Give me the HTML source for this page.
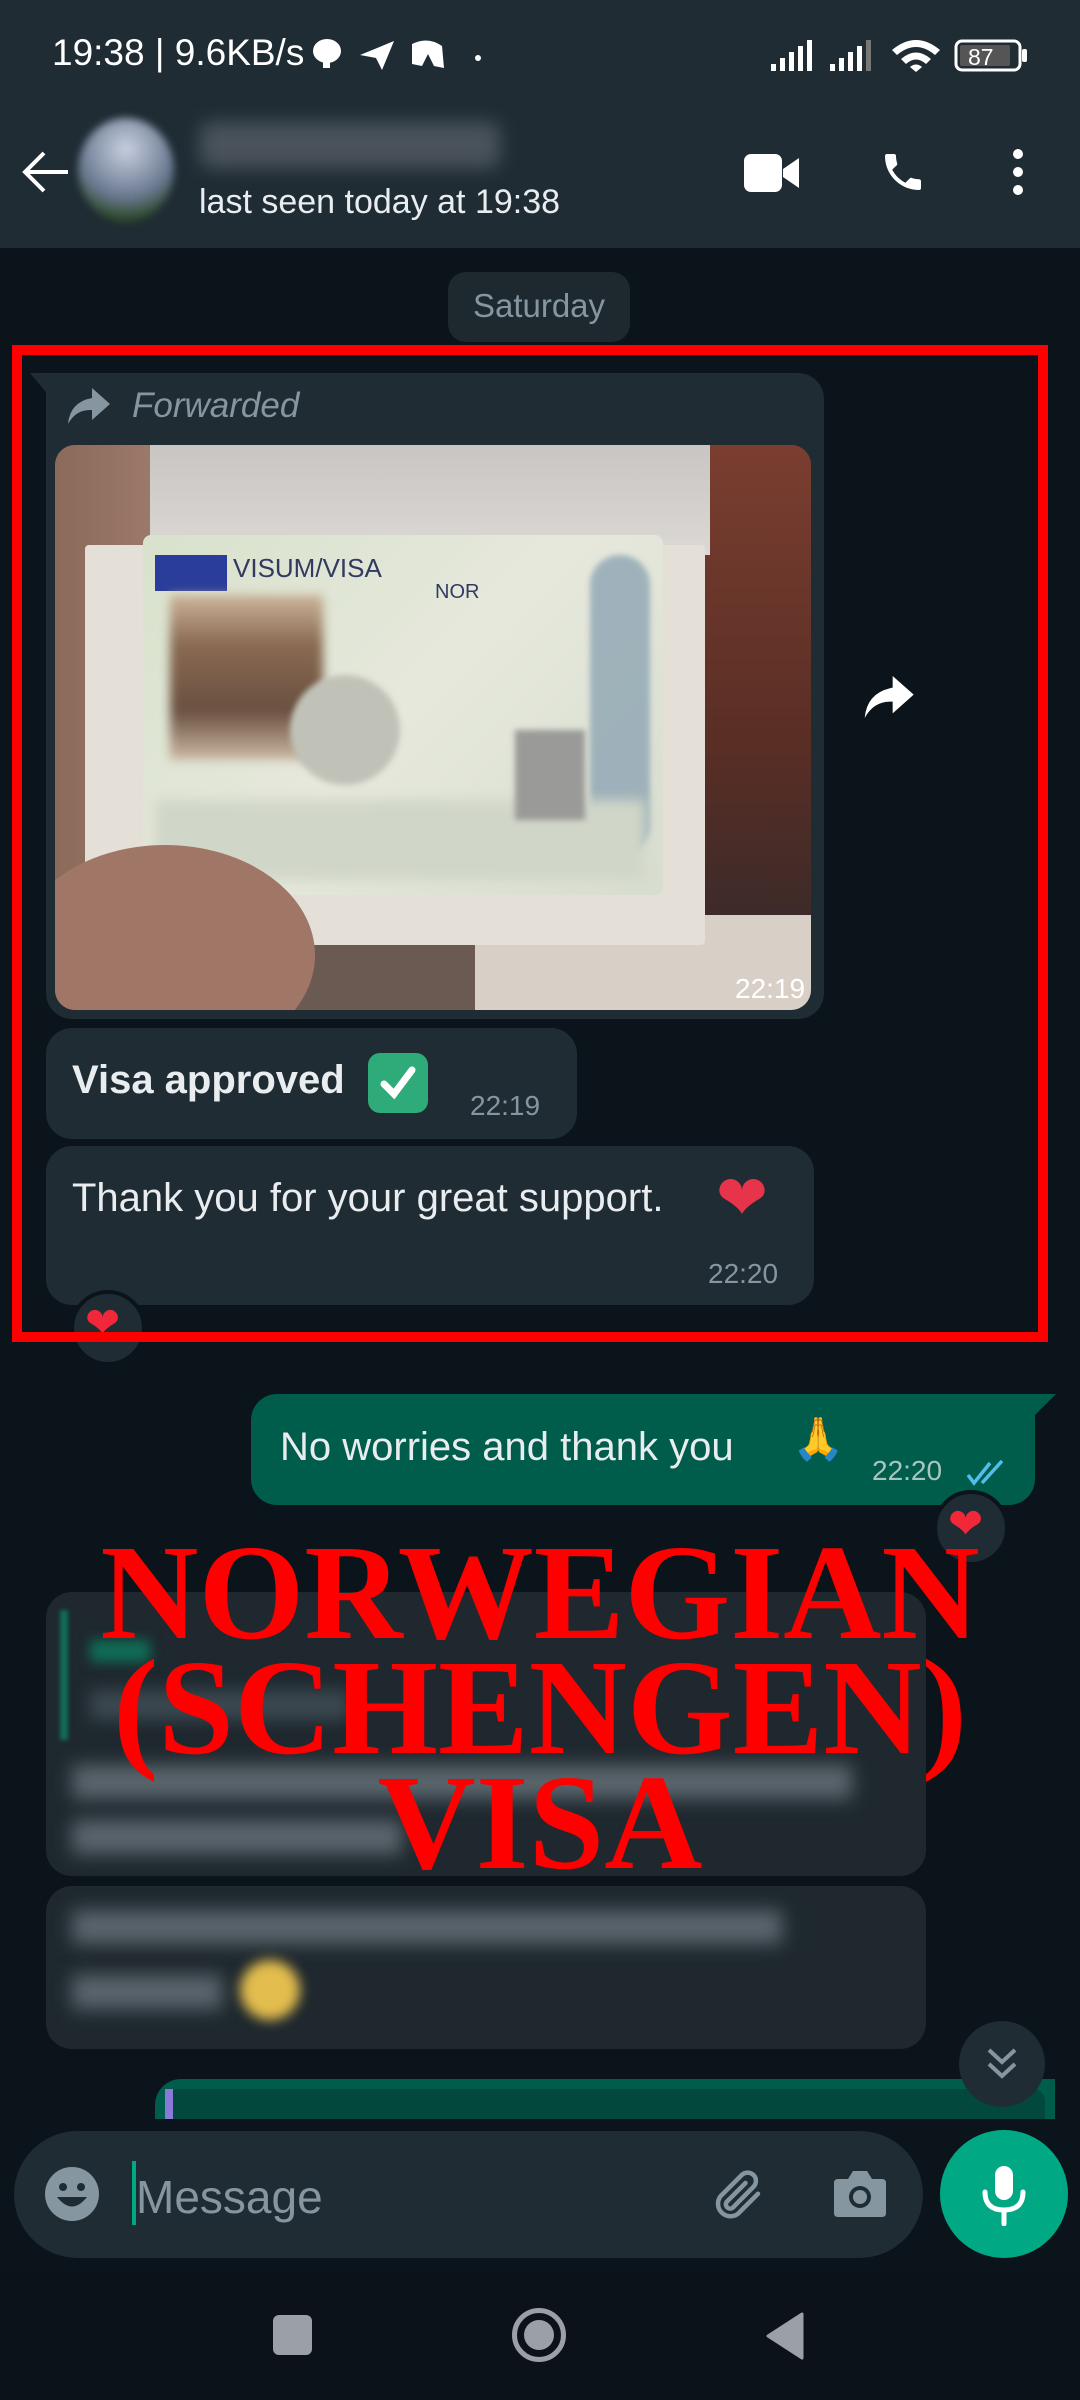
<!DOCTYPE html>
<html><head><meta charset="utf-8"><style>
*{margin:0;padding:0;box-sizing:border-box}
body{width:1080px;height:2400px;background:#0b141a;font-family:"Liberation Sans",sans-serif;position:relative;overflow:hidden;color:#e9edef}
.a{position:absolute}
.bub{position:absolute;background:#202c33;border-radius:26px}
.t{position:absolute;white-space:nowrap}
.time{color:#8696a0;font-size:28px}
</style></head><body>
<!-- header -->
<div class="a" style="left:0;top:0;width:1080px;height:248px;background:#1f2c34"></div>
<div class="t" style="left:52px;top:32px;font-size:37px;color:#fff">19:38 | 9.6KB/s</div>
<svg class="a" style="left:310px;top:38px" width="180" height="34" viewBox="0 0 180 34" fill="#fff"><ellipse cx="17" cy="13" rx="14" ry="12"/><rect x="13" y="20" width="7" height="10"/><path d="M50 17 L84 3 L72 32 L66 20 Z"/><path d="M102 6 Q118 -2 132 8 L134 30 L124 28 L118 16 L112 28 L102 26 Z"/><circle cx="168" cy="20" r="3"/></svg>
<svg class="a" style="left:771px;top:38px" width="260" height="34" viewBox="0 0 260 34" fill="#fff"><rect x="0" y="26" width="5" height="7"/><rect x="9" y="20" width="5" height="13"/><rect x="18" y="14" width="5" height="19"/><rect x="27" y="8" width="5" height="25"/><rect x="36" y="2" width="5" height="31"/><rect x="59" y="26" width="5" height="7"/><rect x="68" y="20" width="5" height="13"/><rect x="77" y="14" width="5" height="19"/><rect x="86" y="8" width="5" height="25"/><rect x="95" y="2" width="5" height="31" fill="#777"/><path d="M121 12 Q145 -8 169 12 L164 17 Q145 1 126 17Z M130 21 Q145 8 160 21 L155 26 Q145 17 135 26Z M139 29 Q145 24 151 29 L145 34Z"/><rect x="185" y="3" width="64" height="29" rx="6" fill="none" stroke="#fff" stroke-width="3"/><rect x="189" y="7" width="50" height="21" rx="2" fill="#555"/><rect x="251" y="11" width="5" height="13" rx="2"/><text x="197" y="27" font-size="23" font-family="Liberation Sans" fill="#fff">87</text></svg>
<svg class="a" style="left:22px;top:150px" width="48" height="44" viewBox="0 0 48 44" fill="none" stroke="#fff" stroke-width="4"><path d="M46 22H4M22 3L3 22L22 41"/></svg>
<div class="a" style="left:78px;top:118px;width:96px;height:104px;border-radius:50%;background:radial-gradient(circle at 50% 30%,#c8d0e0,#6a7890 55%,#2d4a2a 80%);filter:blur(4px)"></div>
<div class="a" style="left:200px;top:122px;width:300px;height:46px;background:#4a535a;filter:blur(9px);border-radius:10px"></div>
<div class="t" style="left:199px;top:183px;font-size:34px;color:#e9edef">last seen today at 19:38</div>
<svg class="a" style="left:744px;top:154px" width="56" height="38" viewBox="0 0 56 38" fill="#fff"><rect x="0" y="0" width="38" height="38" rx="7"/><path d="M39 15 L55 4 V34 L39 23Z"/></svg>
<svg class="a" style="left:878px;top:148px" width="50" height="48" viewBox="0 0 24 24" fill="#fff"><path d="M6.6 10.8c1.4 2.8 3.8 5.1 6.6 6.6l2.2-2.2c.3-.3.7-.4 1-.2 1.1.4 2.300.6 3.6.6.6 0 1 .4 1 1V20c0 .6-.4 1-1 1C10.6 21 3 13.4 3 4c0-.6.4-1 1-1h3.5c.6 0 1 .4 1 1 0 1.3.2 2.5.6 3.6.1.3 0 .7-.2 1z"/></svg>
<svg class="a" style="left:1010px;top:148px" width="16" height="48" viewBox="0 0 16 48" fill="#fff"><circle cx="8" cy="6" r="5"/><circle cx="8" cy="24" r="5"/><circle cx="8" cy="42" r="5"/></svg>

<!-- date pill -->
<div class="a" style="left:448px;top:272px;width:182px;height:70px;background:#1d282f;border-radius:18px"></div>
<div class="t" style="left:448px;top:287px;width:182px;text-align:center;font-size:33px;color:#8696a0">Saturday</div>

<!-- forwarded image bubble -->
<div class="bub" style="left:46px;top:373px;width:778px;height:646px;border-top-left-radius:0"></div>
<svg class="a" style="left:30px;top:373px" width="20" height="24"><path d="M0 0H20V24Z" fill="#202c33"/></svg>
<svg class="a" style="left:66px;top:388px" width="44" height="36" viewBox="0 0 44 36" fill="#8696a0"><path d="M26 0 L44 16 L26 32 V22 Q10 21 2 36 Q4 14 26 10Z"/></svg>
<div class="t" style="left:132px;top:386px;font-size:35px;font-style:italic;color:#8696a0">Forwarded</div>
<div class="a" style="left:55px;top:445px;width:756px;height:565px;border-radius:20px;overflow:hidden;background:#6b5a52">
  <div class="a" style="left:0;top:0;width:200px;height:565px;background:linear-gradient(90deg,#8a6a5a,#b08878)"></div>
  <div class="a" style="left:610px;top:0;width:146px;height:490px;background:linear-gradient(180deg,#7a3e30,#5a2e25 60%,#3a2a2a)"></div>
  <div class="a" style="left:420px;top:470px;width:336px;height:95px;background:#d8d0c6"></div>
  <div class="a" style="left:95px;top:0;width:560px;height:110px;background:linear-gradient(180deg,#c9c5c3,#dcd8d4)"></div>
  <div class="a" style="left:30px;top:100px;width:620px;height:400px;background:#e4e0d8;border-radius:4px"></div>
  <div class="a" style="left:88px;top:90px;width:520px;height:360px;background:linear-gradient(135deg,#d8e2cc,#e6e8dc 50%,#d7ddcf);border-radius:8px"></div>
  <div class="a" style="left:100px;top:110px;width:72px;height:36px;background:#2b3d9a"></div>
  <div class="t" style="left:178px;top:108px;font-size:26px;color:#333a60">VISUM/VISA</div>
  <div class="t" style="left:380px;top:136px;font-size:20px;color:#333a60">NOR</div>
  <div class="a" style="left:535px;top:110px;width:60px;height:300px;background:#8fa6b4;border-radius:30px;filter:blur(3px);opacity:.8"></div>
  <div class="a" style="left:115px;top:150px;width:153px;height:165px;background:linear-gradient(180deg,#cbb49a,#8a6a52 30%,#6a5040 70%,#cdb9a4);filter:blur(5px)"></div>
  <div class="a" style="left:235px;top:230px;width:110px;height:110px;border-radius:50%;background:#c0c2b8;filter:blur(3px)"></div>
  <div class="a" style="left:100px;top:355px;width:490px;height:80px;background:#d0d6c8;filter:blur(6px)"></div>
  <div class="a" style="left:460px;top:285px;width:70px;height:90px;background:#9a9a98;filter:blur(3px)"></div>
  <div class="a" style="left:-40px;top:400px;width:300px;height:220px;border-radius:50%;background:#a07666"></div>
  <div class="t" style="left:680px;top:528px;font-size:28px;color:#fff">22:19</div>
</div>
<svg class="a" style="left:862px;top:676px" width="52" height="42" viewBox="0 0 44 36" fill="#fff"><path d="M26 0 L44 16 L26 32 V22 Q10 21 2 36 Q4 14 26 10Z"/></svg>

<!-- Visa approved -->
<div class="bub" style="left:46px;top:1028px;width:531px;height:111px"></div>
<div class="t" style="left:72px;top:1058px;font-size:40px;font-weight:bold;color:#e9edef">Visa approved</div>
<div class="a" style="left:368px;top:1053px;width:60px;height:60px;border-radius:12px;background:#2eab78"></div>
<svg class="a" style="left:372px;top:1058px" width="52" height="50" viewBox="0 0 52 50"><path d="M12 26 L22 36 L40 12" fill="none" stroke="#fff" stroke-width="7" stroke-linecap="round"/></svg>
<div class="t time" style="left:470px;top:1090px">22:19</div>

<!-- Thank you -->
<div class="bub" style="left:46px;top:1146px;width:768px;height:159px"></div>
<div class="t" style="left:72px;top:1176px;font-size:40px;color:#e9edef">Thank you for your great support.</div>
<div class="a" style="left:716px;top:1168px;font-size:62px;color:#e8344a;line-height:1">❤</div>
<div class="t time" style="left:708px;top:1258px">22:20</div>
<div class="a" style="left:70px;top:1290px;width:76px;height:76px;border-radius:50%;background:#202c33;border:4px solid #0b141a"></div>
<div class="a" style="left:85px;top:1302px;font-size:42px;color:#f0283a;line-height:1">❤</div>

<!-- red box -->
<div class="a" style="left:12px;top:345px;width:1036px;height:997px;border:10px solid #ff0000"></div>

<!-- outgoing -->
<div class="a" style="left:251px;top:1394px;width:784px;height:111px;background:#005c4b;border-radius:26px;border-top-right-radius:0"></div>
<svg class="a" style="left:1030px;top:1394px" width="26" height="26"><path d="M0 0H26L0 26Z" fill="#005c4b"/></svg>
<div class="t" style="left:280px;top:1425px;font-size:40px;color:#e9edef">No worries and thank you</div>
<div class="a" style="left:792px;top:1418px;font-size:42px;color:#f5b82e;line-height:1">🙏</div>
<div class="t" style="left:872px;top:1455px;font-size:28px;color:#a8c6bf">22:20</div>
<svg class="a" style="left:966px;top:1459px" width="44" height="28" viewBox="0 0 44 28" fill="none" stroke="#53bdeb" stroke-width="3.5"><path d="M2 16 L8 24 L24 4 M16 24 L36 2"/></svg>
<div class="a" style="left:933px;top:1490px;width:76px;height:76px;border-radius:50%;background:#202c33;border:4px solid #0b141a"></div>
<div class="a" style="left:948px;top:1503px;font-size:42px;color:#f0283a;line-height:1">❤</div>

<!-- blurred incoming -->
<div class="bub" style="left:46px;top:1592px;width:880px;height:284px;background:#1e282e"></div>
<div class="a" style="left:60px;top:1610px;width:8px;height:130px;background:#0f6e56;filter:blur(2px)"></div>
<div class="a" style="left:90px;top:1640px;width:60px;height:22px;background:#0f6e56;filter:blur(6px)"></div>
<div class="a" style="left:90px;top:1690px;width:260px;height:30px;background:#3b4850;filter:blur(8px)"></div>
<div class="a" style="left:72px;top:1765px;width:780px;height:34px;background:#5a656c;filter:blur(9px)"></div>
<div class="a" style="left:72px;top:1820px;width:330px;height:34px;background:#5a656c;filter:blur(9px)"></div>
<div class="bub" style="left:46px;top:1886px;width:880px;height:163px;background:#1e282e"></div>
<div class="a" style="left:72px;top:1910px;width:710px;height:34px;background:#5a656c;filter:blur(9px)"></div>
<div class="a" style="left:72px;top:1975px;width:150px;height:34px;background:#5a656c;filter:blur(9px)"></div>
<div class="a" style="left:240px;top:1960px;width:60px;height:60px;border-radius:50%;background:#e3bd4e;filter:blur(6px)"></div>

<!-- overlay text -->
<div class="a" style="left:0;top:1536px;width:1080px;text-align:center;font-family:'Liberation Serif',serif;font-weight:bold;font-size:136px;line-height:115px;color:#ff0000">NORWEGIAN<br>(SCHENGEN)<br>VISA</div>

<!-- green partial + scroll btn -->
<div class="a" style="left:155px;top:2079px;width:900px;height:40px;background:#005c4b;border-radius:26px 0 0 0;overflow:hidden"><div class="a" style="left:10px;top:10px;width:880px;height:40px;background:#02483d;border-radius:12px"></div><div class="a" style="left:10px;top:10px;width:8px;height:40px;background:#8a7ad8"></div></div>
<div class="a" style="left:0;top:2119px;width:1080px;height:152px;background:#0b141a"></div>
<div class="a" style="left:959px;top:2021px;width:86px;height:86px;border-radius:50%;background:#202c33"></div>
<svg class="a" style="left:986px;top:2044px" width="32" height="40" viewBox="0 0 32 40" fill="none" stroke="#8696a0" stroke-width="4"><path d="M3 6 L16 18 L29 6 M3 20 L16 32 L29 20"/></svg>

<!-- input -->
<div class="a" style="left:14px;top:2131px;width:909px;height:127px;border-radius:64px;background:#1f2c34"></div>
<svg class="a" style="left:44px;top:2166px" width="56" height="56" viewBox="0 0 56 56"><circle cx="28" cy="28" r="27" fill="#8696a0"/><circle cx="19" cy="21" r="4" fill="#1f2c34"/><circle cx="37" cy="21" r="4" fill="#1f2c34"/><path d="M13 31 Q28 50 43 31Z" fill="#1f2c34"/></svg>
<div class="a" style="left:132px;top:2161px;width:4px;height:64px;background:#00a884"></div>
<div class="t" style="left:136px;top:2170px;font-size:46px;color:#8696a0">Message</div>
<svg class="a" style="left:708px;top:2165px" width="60" height="60" viewBox="0 0 24 24" fill="none" stroke="#8696a0" stroke-width="1.8" stroke-linecap="round"><path d="M20 11.5 L12 19.5 a5 5 0 0 1-7-7 L13.5 4 a3.3 3.3 0 0 1 4.7 4.7 L10 17 a1.7 1.7 0 0 1-2.4-2.4 L15 7.2"/></svg>
<svg class="a" style="left:832px;top:2165px" width="56" height="56" viewBox="0 0 56 56" fill="#8696a0"><path d="M6 14 H16 L21 6 H35 L40 14 H50 Q54 14 54 18 V48 Q54 52 50 52 H6 Q2 52 2 48 V18 Q2 14 6 14Z"/><circle cx="28" cy="32" r="11" fill="#1f2c34"/><circle cx="28" cy="32" r="7" fill="#8696a0"/></svg>
<div class="a" style="left:940px;top:2130px;width:128px;height:128px;border-radius:50%;background:#00a884"></div>
<svg class="a" style="left:980px;top:2164px" width="48" height="62" viewBox="0 0 48 62" fill="none" stroke="#fff" stroke-width="5"><rect x="15" y="2" width="18" height="34" rx="9" fill="#fff" stroke="none"/><path d="M5 28 Q5 46 24 46 Q43 46 43 28 M24 46 V60" stroke-linecap="round"/></svg>

<!-- nav bar -->
<div class="a" style="left:0;top:2271px;width:1080px;height:129px;background:#0b121a"></div>
<div class="a" style="left:273px;top:2315px;width:39px;height:40px;border-radius:6px;background:#9aa0a6"></div>
<div class="a" style="left:512px;top:2308px;width:54px;height:54px;border-radius:50%;border:5px solid #9aa0a6"></div>
<div class="a" style="left:524px;top:2320px;width:30px;height:30px;border-radius:50%;background:#9aa0a6"></div>
<svg class="a" style="left:766px;top:2312px" width="38" height="48"><path d="M36 2 L2 24 L36 46Z" fill="#9aa0a6" stroke="#9aa0a6" stroke-width="3" stroke-linejoin="round"/></svg>
</body></html>
